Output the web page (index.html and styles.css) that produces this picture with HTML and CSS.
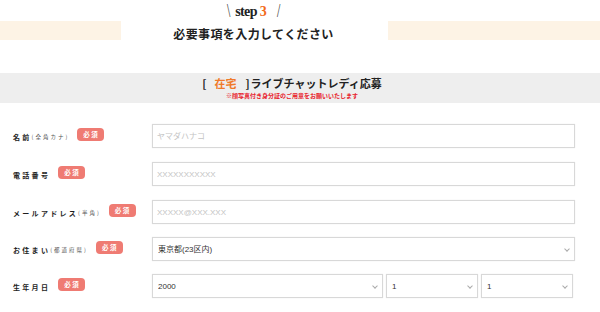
FILE: index.html
```html
<!DOCTYPE html>
<html lang="ja">
<head>
<meta charset="utf-8">
<link rel="stylesheet" href="styles.css">
</head>
<body>
<div class="head">
  <div class="step"><span class="sl">\</span><span class="stepw">step</span><span class="num">3</span><span class="sl sl2">/</span></div>
  <div class="bar bar-l"></div>
  <h1 class="title">必要事項を入力してください</h1>
  <div class="bar bar-r"></div>
</div>
<div class="band">
  <div class="band-title"><span class="br">[</span><span class="zt">在宅</span><span class="br2">]</span>ライブチャットレディ応募</div>
  <div class="note">※顔写真付き身分証のご用意をお願いいたします</div>
</div>
<form class="form">
  <div class="row">
    <div class="label"><span class="lt">名前</span><span class="ls">(全角カナ)</span><span class="req">必須</span></div>
    <input class="inp" type="text" placeholder="ヤマダハナコ">
  </div>
  <div class="row">
    <div class="label"><span class="lt">電話番号</span><span class="req">必須</span></div>
    <input class="inp" type="text" placeholder="XXXXXXXXXXX">
  </div>
  <div class="row">
    <div class="label"><span class="lt">メールアドレス</span><span class="ls">(半角)</span><span class="req">必須</span></div>
    <input class="inp" type="text" placeholder="XXXXX@XXX.XXX">
  </div>
  <div class="row">
    <div class="label"><span class="lt">お住まい</span><span class="ls">(都道府県)</span><span class="req">必須</span></div>
    <div class="sel full"><select><option>東京都(23区内)</option></select></div>
  </div>
  <div class="row">
    <div class="label"><span class="lt">生年月日</span><span class="req">必須</span></div>
    <div class="dates">
      <div class="sel year"><select><option>2000</option></select></div>
      <div class="sel md"><select><option>1</option></select></div>
      <div class="sel md"><select><option>1</option></select></div>
    </div>
  </div>
</form>
</body>
</html>
```
FILE: styles.css
```css
* { box-sizing: border-box; }
body {
  margin: 0;
  background: #fff;
  font-family: "Noto Sans CJK JP", "Noto Sans", sans-serif;
  color: #222;
  width: 600px;
  height: 312px;
  overflow: hidden;
}
.head {
  display: grid;
  grid-template-columns: 121px 267px 1fr;
  grid-template-rows: 21px 19px;
}
.step {
  grid-column: 2;
  grid-row: 1;
  display: flex;
  justify-content: center;
  align-items: flex-end;
  height: 21px;
  padding-bottom: 2px;
  padding-right: 2px;
}
.sl {
  font-family: "DejaVu Sans", sans-serif;
  font-weight: 200;
  font-size: 15px;
  line-height: 15px;
  color: #333;
  margin-right: 4px;
  transform: scaleX(0.75);
}
.sl2 { margin-right: 0; margin-left: 9px; }
.stepw {
  font-family: "Liberation Serif", serif;
  font-weight: bold;
  font-size: 14px;
  line-height: 14px;
  letter-spacing: -0.6px;
  color: #222;
}
.num {
  font-family: "Liberation Serif", serif;
  font-weight: bold;
  font-size: 14px;
  line-height: 14px;
  color: #f26a1b;
  margin-left: 3px;
}
.bar { background: #fdf3e5; grid-row: 2; }
.bar-l { grid-column: 1; }
.bar-r { grid-column: 3; }
.title {
  grid-column: 2;
  grid-row: 2;
  margin: 0;
  font-size: 12px;
  line-height: 19px;
  font-weight: bold;
  letter-spacing: 0.4px;
  text-align: center;
  white-space: nowrap;
  color: #222;
  padding-top: 3px;
  padding-right: 2px;
}
.band {
  margin-top: 33px;
  height: 30px;
  background: #eeeeee;
  display: flex;
  flex-direction: column;
  align-items: center;
  padding-top: 3px;
  padding-right: 16px;
}
.band-title {
  font-size: 11px;
  line-height: 15px;
  font-weight: bold;
  color: #222;
  white-space: nowrap;
}
.br { margin-right: 8px; }
.zt { color: #f07a2a; margin-right: 9px; }
.br2 { margin-right: 1px; }
.note {
  font-size: 6px;
  line-height: 8px;
  font-weight: bold;
  color: #e8202a;
  white-space: nowrap;
  margin-top: 1px;
}
.form {
  margin: 21px 0 0 0;
}
.row {
  display: flex;
  align-items: center;
  height: 24px;
  margin-bottom: 14px;
}
.row:nth-child(3) { margin-bottom: 13px; }
.row:nth-child(4) { margin-bottom: 13px; }
.label {
  width: 152px;
  padding-left: 13px;
  display: flex;
  align-items: center;
  white-space: nowrap;
  padding-top: 1px;
}
.lt {
  font-size: 7px;
  font-weight: bold;
  letter-spacing: 2.3px;
  color: #1e1e1e;
}
.ls {
  font-size: 5.5px;
  letter-spacing: 2px;
  color: #555;
  margin-top: 1px;
}
.req {
  margin-left: 8px;
  width: 27px;
  height: 13px;
  border-radius: 4px;
  background: #ef7b73;
  color: #fff;
  font-size: 6.5px;
  font-weight: bold;
  letter-spacing: 1.5px;
  display: flex;
  align-items: center;
  justify-content: center;
  padding-left: 1px;
  margin-top: -5px;
}
.inp {
  display: block;
  width: 423px;
  height: 24px;
  border: 1px solid #d8d8d8;
  box-shadow: 0 0 1px #e4e4e4;
  border-radius: 0;
  padding: 0 4px;
  font-family: "Liberation Sans", "Noto Sans CJK JP", sans-serif;
  font-size: 8px;
  color: #333;
  outline: none;
  background: #fff;
}
.inp::placeholder { color: #c4c4c4; }
.sel { position: relative; height: 24px; }
.sel select {
  display: block;
  appearance: none;
  -webkit-appearance: none;
  width: 100%;
  height: 24px;
  border: 1px solid #d8d8d8;
  box-shadow: 0 0 1px #e4e4e4;
  border-radius: 0;
  background: #fff;
  padding: 0 5px;
  font-family: "Liberation Sans", "Noto Sans CJK JP", sans-serif;
  font-size: 8px;
  color: #333;
  outline: none;
}
.sel::after {
  content: "";
  position: absolute;
  right: 6px;
  top: 10px;
  width: 3px;
  height: 3px;
  border-right: 1px solid #aaa;
  border-bottom: 1px solid #aaa;
  transform: rotate(45deg);
}
.full { width: 423px; }
.dates { display: flex; gap: 3px; }
.year { width: 231px; }
.md { width: 92px; }
```
